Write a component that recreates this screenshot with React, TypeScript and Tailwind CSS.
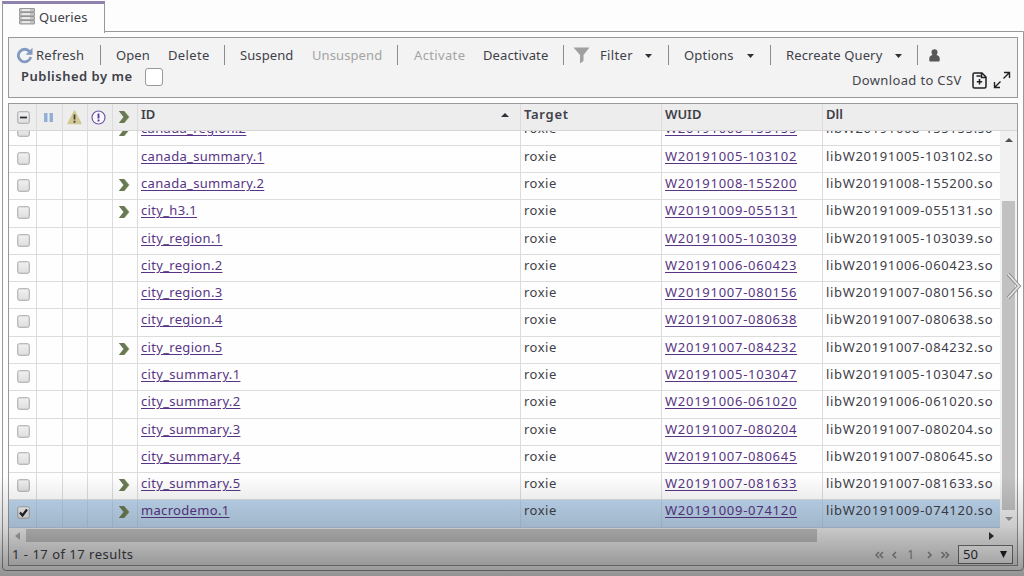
import React from 'react';

interface QueryRow {
  id: string;
  wuid: string;
  active?: boolean;
  selected?: boolean;
}

const rows: QueryRow[] = [
  { id: 'canada_region.2', wuid: 'W20191008-155155', active: true },
  { id: 'canada_summary.1', wuid: 'W20191005-103102' },
  { id: 'canada_summary.2', wuid: 'W20191008-155200', active: true },
  { id: 'city_h3.1', wuid: 'W20191009-055131', active: true },
  { id: 'city_region.1', wuid: 'W20191005-103039' },
  { id: 'city_region.2', wuid: 'W20191006-060423' },
  { id: 'city_region.3', wuid: 'W20191007-080156' },
  { id: 'city_region.4', wuid: 'W20191007-080638' },
  { id: 'city_region.5', wuid: 'W20191007-084232', active: true },
  { id: 'city_summary.1', wuid: 'W20191005-103047' },
  { id: 'city_summary.2', wuid: 'W20191006-061020' },
  { id: 'city_summary.3', wuid: 'W20191007-080204' },
  { id: 'city_summary.4', wuid: 'W20191007-080645' },
  { id: 'city_summary.5', wuid: 'W20191007-081633', active: true },
  { id: 'macrodemo.1', wuid: 'W20191009-074120', active: true, selected: true },
];

const columns = 'grid grid-cols-[28px_26px_25px_25px_25px_383px_141px_161px_177px]';
const cell = 'border-r border-[#dcdcdc] overflow-hidden whitespace-nowrap';

function ActiveIcon() {
  return (
    <svg width="12" height="14" viewBox="0 0 12 14" className="block">
      <path d="M.8 1h5.400l5 6-5 6H.8l4.700-6z" fill="#687a55" />
      <path d="M6.200 1l5 6-5 6" fill="none" stroke="#b5a66f" strokeWidth=".5" />
    </svg>
  );
}

function CheckBox({ mark }: { mark?: 'minus' | 'check' }) {
  return (
    <svg width="13" height="13" viewBox="0 0 13 13" className="block">
      <defs>
        <linearGradient id="box" x1="0" y1="0" x2="0" y2="1">
          <stop offset="0" stopColor="#f1f1f1" />
          <stop offset="1" stopColor="#dedede" />
        </linearGradient>
      </defs>
      <rect x=".75" y=".75" width="11.5" height="11.5" rx="1.5" fill="url(#box)" stroke="#a5a5a5" />
      {mark === 'minus' && <path d="M3 6.5h7" stroke="#30303a" strokeWidth="1.8" />}
      {mark === 'check' && <path d="M3 6.5l2.5 3L10 3.5" fill="none" stroke="#20202c" strokeWidth="2.2" />}
    </svg>
  );
}

function Separator() {
  return <span className="h-5 w-px shrink-0 bg-[#8c8c8c]" />;
}

function Caret() {
  return (
    <svg width="7" height="4" viewBox="0 0 7 4" className="mt-[2px] shrink-0">
      <path d="M0 0h7L3.5 4z" fill="#30303a" />
    </svg>
  );
}

function Toolbar() {
  return (
    <div className="h-[61px] shrink-0 border border-[#999] bg-[#f3f3f3] tracking-[0.35px]">
      <div className="mt-[7px] flex h-5 items-center whitespace-nowrap">
        <svg width="17" height="17" viewBox="0 0 17 17" className="ml-[7px] mr-[3px] shrink-0">
          <path d="M13.6 4.6A6.3 6.3 0 1 0 14.8 10" fill="none" stroke="#8299c2" strokeWidth="2.8" />
          <path d="M16.5 .8v7H9.6z" fill="#8299c2" />
        </svg>
        <span className="w-16 tracking-[0.25px]">Refresh</span>
        <Separator />
        <span className="ml-[15px] w-[52px] tracking-[0.1px]">Open</span>
        <span className="w-14">Delete</span>
        <Separator />
        <span className="ml-[15px] w-[72px] tracking-[0.1px]">Suspend</span>
        <span className="w-[85px] tracking-[0.1px] text-[#a3a3a3]">Unsuspend</span>
        <Separator />
        <span className="ml-4 w-[69px] text-[#a3a3a3]">Activate</span>
        <span className="w-[80px] tracking-[0.1px]">Deactivate</span>
        <Separator />
        <svg width="17" height="17" viewBox="0 0 17 17" className="ml-[9px] mr-[10px] shrink-0">
          <path d="M.5 .5h16l-6 7.5v6L7 16.5V8z" fill="#a0a0a0" />
        </svg>
        <span className="w-[45px]">Filter</span>
        <Caret />
        <span className="w-4" />
        <Separator />
        <span className="ml-[15px] w-[63px] tracking-[0.2px]">Options</span>
        <Caret />
        <span className="w-4" />
        <Separator />
        <span className="ml-[15px] w-[109px] tracking-[0.15px]">Recreate Query</span>
        <Caret />
        <span className="w-[15px]" />
        <Separator />
        <svg width="11" height="13" viewBox="0 0 11 13" className="ml-[11px] shrink-0">
          <circle cx="5.5" cy="3.2" r="3" fill="#575757" />
          <path d="M3.5 4h4v2q3.2.8 3.2 3.3v2.4q0 .8-.8.8H1.1q-.8 0-.8-.8V9.300Q.3 6.800 3.500 6z" fill="#575757" />
        </svg>
      </div>
      <div className="flex h-[22px] items-start justify-between">
        <div className="ml-3 flex items-center">
          <span className="w-[124px] font-semibold tracking-[0.5px]">Published by me</span>
          <span className="mt-[3px] size-[18px] rounded-[3px] border border-[#999] bg-white" />
        </div>
        <div className="mr-[6px] mt-[5px] flex items-center">
          <span className="w-[120px] text-[#44444c]">Download to CSV</span>
          <svg width="15" height="17" viewBox="0 0 15 17" className="mr-[6px]" fill="none" stroke="#202024" strokeWidth="1.5">
            <path d="M2.500 1h7.500l4 4v9.500q0 1.500-1.500 1.500h-10Q1 16 1 14.500v-12Q1 1 2.500 1zM4.500 4h4M9.500 1.500V5.500H14M7.500 7v5.500M4.800 9.700h5.400" />
          </svg>
          <svg width="18" height="18" viewBox="0 0 18 18" fill="none" stroke="#202024" strokeWidth="1.400">
            <path d="M11 1.500h5.500V7M16 2l-5.500 5.500M7 16.500H1.500V11M2 16l5.500-5.500" />
          </svg>
        </div>
      </div>
    </div>
  );
}

function GridHeader() {
  return (
    <div className="h-[27px] shrink-0 overflow-hidden border-b border-[#d6d6d6] bg-[#ededed]">
      <div className={`${columns} h-full font-semibold`}>
        <span className={`${cell} flex items-center pl-2`}><CheckBox mark="minus" /></span>
        <span className={`${cell} flex items-center pl-[7px]`}>
          <svg width="9" height="9"><path d="M0 0h3.500v9H0zM5.500 0H9v9H5.500z" fill="#91b0d4" /></svg>
        </span>
        <span className={`${cell} flex items-center pl-1`}>
          <svg width="15" height="15" viewBox="0 0 15 15">
            <path d="M7.500 1L14 13.500H1z" fill="#d2c994" stroke="#d2c994" strokeWidth="1.500" strokeLinejoin="round" />
            <path d="M7.500 4.500v5M7.500 10.700v2" stroke="#44413a" strokeWidth="1.800" />
          </svg>
        </span>
        <span className={`${cell} flex items-center pl-[3px]`}>
          <svg width="15" height="15" viewBox="0 0 15 15">
            <circle cx="7.500" cy="7.500" r="6.500" fill="#faf8ff" stroke="#7059a8" strokeWidth="1.200" />
            <path d="M7.500 3.500v5M7.500 9.500v2" stroke="#5b3d96" strokeWidth="1.900" />
          </svg>
        </span>
        <span className={`${cell} flex items-center pl-[5px]`}><ActiveIcon /></span>
        <span className="flex justify-between border-r border-[#dcdcdc] pl-[3px] pr-[11px] leading-[20px]">
          ID
          <svg width="8" height="4" className="mt-[9px]"><path d="M0 4h8L4 0z" fill="#30303a" /></svg>
        </span>
        <span className={`${cell} pl-[3px] leading-[20px] tracking-[0.7px]`}>Target</span>
        <span className={`${cell} pl-[3px] leading-[20px]`}>WUID</span>
        <span className="pl-[3px] leading-[20px]">Dll</span>
      </div>
    </div>
  );
}

function GridRow({ row }: { row: QueryRow }) {
  const line = row.selected ? 'border-[#b4c9de]' : 'border-[#dcdcdc]';
  const base = `border-r ${line} overflow-hidden whitespace-nowrap`;
  const link = 'text-[#583584] underline underline-offset-2';
  return (
    <div className={`${columns} h-[27.3px] border-b ${line} ${row.selected ? 'bg-[#bed7ef]' : 'bg-[#fefefe]'}`}>
      <span className={`${base} pl-2 pt-[6px]`}><CheckBox mark={row.selected ? 'check' : undefined} /></span>
      <span className={base} />
      <span className={base} />
      <span className={base} />
      <span className={`${base} pl-[5px] pt-[5px]`}>{row.active && <ActiveIcon />}</span>
      <span className={`${base} ${link} pl-[3px] leading-[21px] tracking-[0.32px]`}>{row.id}</span>
      <span className={`${base} pl-[3px] leading-[21px] tracking-[0.5px]`}>roxie</span>
      <span className={`${base} ${link} pl-[3px] leading-[21px] tracking-[0.73px]`}>{row.wuid}</span>
      <span className="whitespace-nowrap pl-[3px] leading-[21px] tracking-[0.66px]">lib{row.wuid}.so</span>
    </div>
  );
}

function VerticalScrollbar() {
  return (
    <div className="flex w-[17px] flex-col items-center bg-[#f1f1f1]">
      <svg width="8" height="4" className="mt-[7px] shrink-0"><path d="M0 4h8L4 0z" fill="#505057" /></svg>
      <div className="mt-[59px] h-[309px] w-[13px] shrink-0 bg-[#c1c1c1]" />
      <svg width="8" height="4" className="mt-[7px] shrink-0"><path d="M0 0h8L4 4z" fill="#999" /></svg>
    </div>
  );
}

function Footer() {
  return (
    <div className="flex h-[22px] items-center justify-between bg-[#efefef] pl-[3px] pr-1">
      <span className="tracking-[0.5px]">1 - 17 of 17 results</span>
      <div className="flex items-center text-[#8f8f8f]">
        <svg width="32" height="8" fill="none" stroke="#8f8f8f" strokeWidth="1.500" viewBox="0 0 32 8" className="mt-[2px]">
          <path d="M4 1L1 4l3 3M8 1L5 4l3 3M21 1l-3 3 3 3" />
        </svg>
        <span className="w-5">1</span>
        <svg width="31" height="8" fill="none" stroke="#8f8f8f" strokeWidth="1.500" viewBox="0 0 31 8" className="mt-[2px]">
          <path d="M1 1l3 3-3 3M14.500 1l3 3-3 3M18.500 1l3 3-3 3" />
        </svg>
        <span className="flex h-[19px] w-[55px] items-center justify-between border border-[#777] bg-white pl-1 pr-[5px] text-[#30303a]">
          50
          <svg width="7" height="7"><path d="M0 0h7L3.500 7z" fill="#20202c" /></svg>
        </span>
      </div>
    </div>
  );
}

export default function App() {
  return (
    <div className="relative flex h-[576px] w-[1024px] flex-col overflow-hidden bg-[#fdfdfd] font-['Noto_Sans','Open_Sans',sans-serif] text-[13px] leading-5 text-[#3f3f49]">
      <div className="relative z-10 ml-[2px] mt-px flex h-[32px] w-[103px] shrink-0 items-center border-x border-t-[3px] border-x-[#999] border-t-[#9080b0] bg-[#fdfdfd] pb-[4px] pl-4">
        <svg width="16" height="17" viewBox="0 0 16 17" className="mr-1">
          {[0, 4, 8, 12].map((y) => (
            <g key={y}>
              <rect x=".5" y={y + 0.5} width="15" height="3.500" rx=".5" fill="#c4c4c4" stroke="#858585" strokeWidth=".8" />
              <path d={`M3 ${y + 2}h8`} stroke="#f5f5f5" strokeWidth="1.500" />
            </g>
          ))}
        </svg>
        <span className="tracking-[0.1px]">Queries</span>
      </div>
      <div className="-mt-[2px] ml-[2px] flex h-[540px] w-[1022px] flex-col rounded-b border border-[#999] px-[5px] pt-[5px]">
        <Toolbar />
        <div className="mt-[5px] flex h-[463px] shrink-0 flex-col border border-[#999]">
          <GridHeader />
          <div className="flex h-[397px] shrink-0">
            <div className="w-[991px] overflow-hidden">
              <div className="-mt-[12.700px]">
                {rows.map((row) => <GridRow key={row.id} row={row} />)}
              </div>
            </div>
            <VerticalScrollbar />
          </div>
          <div className="flex h-[15px] shrink-0 items-center bg-[#efefef]">
            <svg width="5" height="8" className="ml-[6px] mr-[6px]"><path d="M5 0v8L0 4z" fill="#aaa" /></svg>
            <div className="h-[13px] w-[791px] bg-[#c1c1c1]" />
            <svg width="5" height="8" className="ml-[172px]"><path d="M0 0v8l5-4z" fill="#30303a" /></svg>
          </div>
          <Footer />
        </div>
      </div>
      <svg width="16" height="28" viewBox="0 0 16 28" className="absolute left-[1006px] top-[272px]">
        <path d="M2 2l11 12L2 26" fill="none" stroke="#8a8a8a" strokeWidth="3.500" />
        <path d="M2 2l11 12L2 26" fill="none" stroke="#e5e5e5" strokeWidth="1.800" />
      </svg>
      <div className="pointer-events-none absolute inset-x-0 bottom-0 z-20 h-[100px] bg-linear-to-b from-black/0 via-black/15 to-black/42" />
    </div>
  );
}
